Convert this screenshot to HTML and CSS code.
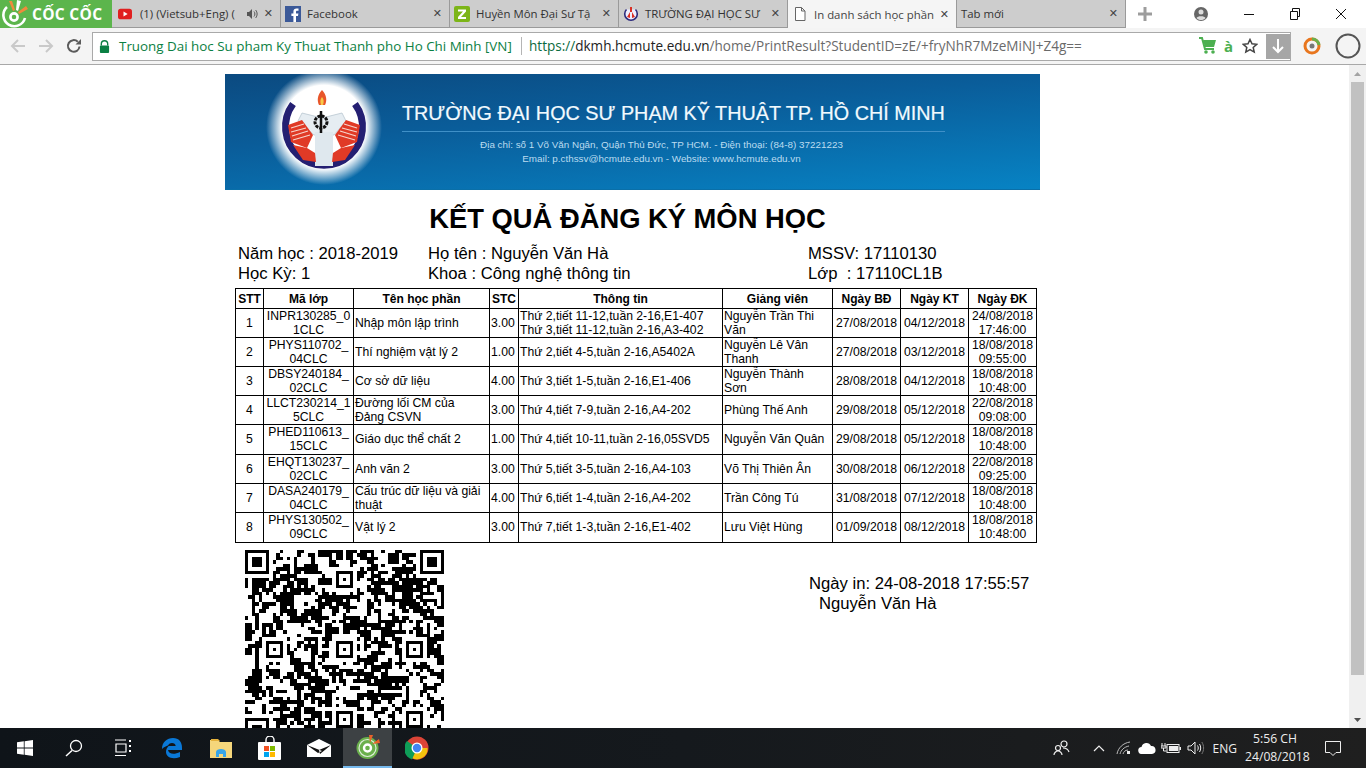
FILE: index.html
```html
<!DOCTYPE html>
<html lang="vi">
<head>
<meta charset="utf-8">
<title>In danh sách học phần</title>
<link rel="stylesheet" href="styles.css">
</head>
<body>
<div class="tabstrip">
  <div class="brand">
    <svg class="brand-logo" viewBox="0 0 28 28" width="28" height="28"><path d="M6 7A11 11 0 1 0 24 18" fill="none" stroke="#fff" stroke-width="2.600"/><circle cx="13" cy="17" r="3.600" fill="none" stroke="#fff" stroke-width="2.600"/><path d="M8 1l4 10 2-1-3-9z" fill="#f08a3c"/><path d="M16 0l-1 10 2 1 3-10z" fill="#fff"/><path d="M25 6l-8 6 1 2 9-5z" fill="#f08a3c"/></svg>
    <span class="brand-name">CỐC CỐC</span>
  </div>
  <div class="tab t1">
    <svg class="fav" viewBox="0 0 16 16" width="14" height="14"><rect y="2" width="16" height="12" rx="3" fill="#e02020"/><path d="M6.300 5.200v5.600L11 8z" fill="#fff"/></svg>
    <span class="tab-title">(1) (Vietsub+Eng) (</span>
    <svg class="speaker" viewBox="0 0 12 12" width="12" height="12"><path d="M1 4h2l3-3v10L3 8H1z" fill="#555"/><path d="M8 3.500c1.200 1.400 1.200 3.600 0 5M9.600 2c2 2.300 2 5.700 0 8" fill="none" stroke="#555"/></svg>
    <span class="close">✕</span>
  </div>
  <div class="tab">
    <svg class="fav" viewBox="0 0 16 16" width="16" height="16"><rect width="16" height="16" fill="#3b5998"/><path d="M11 16V10h2l.4-2.500H11V6c0-.8.3-1.200 1.200-1.200h1.300V2.600C13 2.500 12.400 2.500 11.600 2.500 9.600 2.500 8.400 3.700 8.400 5.700V7.500H6.400V10h2v6z" fill="#fff"/></svg>
    <span class="tab-title">Facebook</span>
    <span class="close">✕</span>
  </div>
  <div class="tab">
    <svg class="fav" viewBox="0 0 16 16" width="16" height="16"><rect width="16" height="16" rx="2" fill="#7cb518"/><path d="M4 3.500h8v2L7 11h5v2H4v-2l5-5.500H4z" fill="#fff"/></svg>
    <span class="tab-title">Huyền Môn Đại Sư Tậ</span>
    <span class="close">✕</span>
  </div>
  <div class="tab">
    <svg class="fav" viewBox="0 0 16 16" width="16" height="16"><path d="M3.500 3.500a6.300 6.300 0 1 0 9 0" fill="#eef" stroke="#2c2a7c" stroke-width="1.600"/><path d="M4 11l3-5v6zM12 11L9 6v6z" fill="#d93025"/><path d="M8 1v5" stroke="#d93025" stroke-width="2"/></svg>
    <span class="tab-title">TRƯỜNG ĐẠI HỌC SƯ</span>
    <span class="close">✕</span>
  </div>
  <div class="tab active">
    <svg class="fav" viewBox="0 0 16 16" width="16" height="16"><path d="M3.500 1.500h6l3.500 3.500v9.500h-9.500zM9.500 1.500V5H13" fill="#fff" stroke="#666"/></svg>
    <span class="tab-title">In danh sách học phần</span>
    <span class="close">✕</span>
  </div>
  <div class="tab last">
    <span class="tab-title">Tab mới</span>
    <span class="close">✕</span>
  </div>
  <svg class="plus" viewBox="0 0 14 14" width="14" height="14"><path d="M5.500 0h3v5.500H14v3H8.500V14h-3V8.500H0v-3h5.500z" fill="#9d9d9d"/></svg>
  <div class="winctl">
    <svg class="profile" viewBox="0 0 16 16" width="16" height="16"><circle cx="8" cy="8" r="7" fill="#666"/><circle cx="8" cy="6" r="2.500" fill="#ddd"/><path d="M3.500 12c1-2.500 8-2.500 9 0-1.200 1.400-2.800 2-4.500 2s-3.300-.6-4.500-2z" fill="#ddd"/></svg>
    <svg class="wbtn" viewBox="0 0 46 20" width="46" height="20"><path d="M18 10.500h10" stroke="#111"/></svg>
    <svg class="wbtn" viewBox="0 0 46 20" width="46" height="20"><path d="M18.500 7.500h7v8h-7zM20.500 7.500v-3h7v8h-2" fill="none" stroke="#111"/></svg>
    <svg class="wbtn" viewBox="0 0 46 20" width="46" height="20"><path d="M18 5l10 10M28 5L18 15" stroke="#111"/></svg>
  </div>
</div>
<div class="toolbar">
  <svg class="nav" viewBox="0 0 16 16" width="16" height="16"><path d="M15 8H2M8 2L2 8l6 6" fill="none" stroke="#c9c9c9" stroke-width="2"/></svg>
  <svg class="nav" viewBox="0 0 16 16" width="16" height="16"><path d="M1 8h13M8 2l6 6-6 6" fill="none" stroke="#c9c9c9" stroke-width="2"/></svg>
  <svg class="nav" viewBox="0 0 16 16" width="16" height="16"><path d="M13.500 8.500A5.800 5.800 0 1 1 11.800 3.800" fill="none" stroke="#5a5a5a" stroke-width="2"/><path d="M9.500 6.500H15V1z" fill="#5a5a5a"/></svg>
  <div class="omnibox">
    <svg class="lock" viewBox="0 0 12 14" width="11" height="13"><path d="M2.500 6V4.200a3.500 3.500 0 0 1 7 0V6" fill="none" stroke="#0b8043" stroke-width="1.500"/><rect x="1" y="6" width="10" height="8" rx="1" fill="#0b8043"/></svg>
    <span class="cert">Truong Dai hoc Su pham Ky Thuat Thanh pho Ho Chi Minh [VN]</span>
    <span class="sep"></span>
    <span class="url"><span class="url-green">https://</span><span class="url-host">dkmh.hcmute.edu.vn</span>/home/PrintResult?StudentID=zE/+fryNhR7MzeMiNJ+Z4g==</span>
    <svg class="cart" viewBox="0 0 20 18" width="20" height="18"><path d="M1 1h3l3 11h9" fill="none" stroke="#4caf50" stroke-width="2"/><path d="M5 3h13l-2 7H7z" fill="#4caf50"/><circle cx="8" cy="15" r="1.800" fill="#4caf50"/><circle cx="15" cy="15" r="1.800" fill="#4caf50"/></svg>
    <span class="a-mark">à</span>
    <svg class="star" viewBox="0 0 16 16" width="16" height="16"><path d="M8 1.500l2 4.300 4.700.5-3.500 3.200 1 4.600L8 11.700l-4.200 2.400 1-4.600-3.500-3.200 4.700-.5z" fill="none" stroke="#444" stroke-width="1.500"/></svg>
    <div class="dl"><svg viewBox="0 0 14 16" width="14" height="16"><path d="M7 1v13M2 9l5 5 5-5" fill="none" stroke="#fff" stroke-width="2"/></svg></div>
  </div>
  <svg class="ext" viewBox="0 0 18 18" width="18" height="18"><circle cx="9" cy="9" r="7" fill="none" stroke="#e8761e" stroke-width="3"/><path d="M9 2a7 7 0 0 1 7 6" fill="none" stroke="#6ab04c" stroke-width="3"/><circle cx="9" cy="9" r="2.500" fill="#777"/></svg>
  <svg class="ring" viewBox="0 0 26 26" width="26" height="26"><circle cx="13" cy="13" r="11.500" fill="none" stroke="#555" stroke-width="2"/></svg>
</div>
<div class="viewport">
  <main class="page">
    <div class="banner">
      <svg class="seal" viewBox="0 0 100 100" width="100" height="100">
        <defs><radialGradient id="glow"><stop offset="72%" stop-color="#fff"/><stop offset="100%" stop-color="#fff" stop-opacity="0"/></radialGradient></defs>
        <circle cx="51" cy="47" r="58" fill="url(#glow)"/>
        <path d="M20 24A38.500 38.500 0 1 0 82 24" fill="none" stroke="#241f72" stroke-width="7"/>
        <path d="M49 10c5 5 5 11 3 15h-6c-2-4-2-10 3-15z" fill="#e8562a"/>
        <path d="M49 17c2 2 2 5 1 8h-2c-1-3-1-6 1-8z" fill="#f7c948"/>
        <path d="M29 33l20 5 20-5 4 8-12 14H41L25 41z" fill="#e6edf2" stroke="#b9c6d0" stroke-width=".8"/>
        <path d="M42 52h18v34H42z" fill="#dfe8ee"/>
        <path d="M15 45l14-5 11 15-6 13-16-6z" fill="#e03a26"/>
        <path d="M87 45l-14-5-11 15 6 13 16-6z" fill="#e03a26"/>
        <path d="M18 48l13-4M18 52l15-4M19 56l16-5M20 60l17-5M84 48l-13-4M84 52l-15-4M83 56l-16-5M82 60l-17-5" stroke="#f6d5cc" stroke-width="1.200"/>
        <path d="M20 65l14 3 8 5 1 9-13-2z" fill="#e03a26"/>
        <path d="M82 65l-14 3-8 5-1 9 13-2z" fill="#e03a26"/>
        <circle cx="48" cy="42" r="6" fill="none" stroke="#111" stroke-width="3" stroke-dasharray="3 1"/>
        <path d="M48 31v22" stroke="#111" stroke-width="2.500"/>
      </svg>
      <div class="banner-text">
        <div class="banner-title">TRƯỜNG ĐẠI HỌC SƯ PHẠM KỸ THUẬT TP. HỒ CHÍ MINH</div>
        <div class="banner-rule"></div>
        <div class="banner-lines">
          <div class="banner-line">Địa chỉ: số 1 Võ Văn Ngân, Quận Thủ Đức, TP HCM. - Điện thoại: (84-8) 37221223</div>
          <div class="banner-line">Email: p.cthssv@hcmute.edu.vn - Website: www.hcmute.edu.vn</div>
        </div>
      </div>
    </div>
    <h1 class="title">KẾT QUẢ ĐĂNG KÝ MÔN HỌC</h1>
    <div class="info">
      <span>Năm học : 2018-2019</span><span>Họ tên : Nguyễn Văn Hà</span><span>MSSV: 17110130</span>
      <span>Học Kỳ: 1</span><span>Khoa : Công nghệ thông tin</span><span>Lớp &nbsp;: 17110CL1B</span>
    </div>
    <table class="grid">
      <colgroup>
        <col class="c1"><col class="c2"><col class="c3"><col class="c4"><col class="c5"><col class="c6"><col class="c7"><col class="c7"><col class="c8">
      </colgroup>
      <thead>
        <tr><th>STT</th><th>Mã lớp</th><th>Tên học phần</th><th>STC</th><th>Thông tin</th><th>Giảng viên</th><th>Ngày BĐ</th><th>Ngày KT</th><th>Ngày ĐK</th></tr>
      </thead>
      <tbody>
        <tr><td class="ctr">1</td><td class="ctr">INPR130285_0<br>1CLC</td><td>Nhập môn lập trình</td><td>3.00</td><td>Thứ 2,tiết 11-12,tuần 2-16,E1-407<br>Thứ 3,tiết 11-12,tuần 2-16,A3-402</td><td>Nguyễn Trần Thi<br>Văn</td><td class="ctr">27/08/2018</td><td class="ctr">04/12/2018</td><td class="ctr">24/08/2018<br>17:46:00</td></tr>
        <tr><td class="ctr">2</td><td class="ctr">PHYS110702_<br>04CLC</td><td>Thí nghiệm vật lý 2</td><td>1.00</td><td>Thứ 2,tiết 4-5,tuần 2-16,A5402A</td><td>Nguyễn Lê Vân<br>Thanh</td><td class="ctr">27/08/2018</td><td class="ctr">03/12/2018</td><td class="ctr">18/08/2018<br>09:55:00</td></tr>
        <tr><td class="ctr">3</td><td class="ctr">DBSY240184_<br>02CLC</td><td>Cơ sở dữ liệu</td><td>4.00</td><td>Thứ 3,tiết 1-5,tuần 2-16,E1-406</td><td>Nguyễn Thành<br>Sơn</td><td class="ctr">28/08/2018</td><td class="ctr">04/12/2018</td><td class="ctr">18/08/2018<br>10:48:00</td></tr>
        <tr><td class="ctr">4</td><td class="ctr">LLCT230214_1<br>5CLC</td><td>Đường lối CM của<br>Đảng CSVN</td><td>3.00</td><td>Thứ 4,tiết 7-9,tuần 2-16,A4-202</td><td>Phùng Thế Anh</td><td class="ctr">29/08/2018</td><td class="ctr">05/12/2018</td><td class="ctr">22/08/2018<br>09:08:00</td></tr>
        <tr class="tall"><td class="ctr">5</td><td class="ctr">PHED110613_<br>15CLC</td><td>Giáo dục thể chất 2</td><td>1.00</td><td>Thứ 4,tiết 10-11,tuần 2-16,05SVD5</td><td>Nguyễn Văn Quân</td><td class="ctr">29/08/2018</td><td class="ctr">05/12/2018</td><td class="ctr">18/08/2018<br>10:48:00</td></tr>
        <tr><td class="ctr">6</td><td class="ctr">EHQT130237_<br>02CLC</td><td>Anh văn 2</td><td>3.00</td><td>Thứ 5,tiết 3-5,tuần 2-16,A4-103</td><td>Võ Thị Thiên Ân</td><td class="ctr">30/08/2018</td><td class="ctr">06/12/2018</td><td class="ctr">22/08/2018<br>09:25:00</td></tr>
        <tr><td class="ctr">7</td><td class="ctr">DASA240179_<br>04CLC</td><td>Cấu trúc dữ liệu và giải<br>thuật</td><td>4.00</td><td>Thứ 6,tiết 1-4,tuần 2-16,A4-202</td><td>Trần Công Tú</td><td class="ctr">31/08/2018</td><td class="ctr">07/12/2018</td><td class="ctr">18/08/2018<br>10:48:00</td></tr>
        <tr class="tall"><td class="ctr">8</td><td class="ctr">PHYS130502_<br>09CLC</td><td>Vật lý 2</td><td>3.00</td><td>Thứ 7,tiết 1-3,tuần 2-16,E1-402</td><td>Lưu Việt Hùng</td><td class="ctr">01/09/2018</td><td class="ctr">08/12/2018</td><td class="ctr">18/08/2018<br>10:48:00</td></tr>
      </tbody>
    </table>
    <div class="foot">
      <svg id="qr" class="qr" viewBox="0 0 57 57" width="199" height="199" shape-rendering="crispEdges"></svg>
      <div class="sign">
        <div>Ngày in: 24-08-2018 17:55:57</div>
        <div class="sign-name">Nguyễn Văn Hà</div>
      </div>
    </div>
  </main>
  <div class="scrollbar">
    <svg class="arrow" viewBox="0 0 17 17" width="17" height="17"><path d="M5 11l3.500-4 3.500 4z" fill="#a3a3a3"/></svg>
    <div class="thumb"></div>
    <svg class="arrow arrow-end" viewBox="0 0 17 17" width="17" height="17"><path d="M5 7l3.500 4 3.500-4z" fill="#505050"/></svg>
  </div>
</div>
<footer class="taskbar">
  <div class="tb-left">
    <span class="tb-btn"><svg viewBox="0 0 16 16" width="16" height="16"><path d="M0 2.300l6.800-1v6.300H0zM7.600 1.200L16 0v7.600H7.600zM0 8.400h6.800v6.300L0 13.700zM7.600 8.400H16V16l-8.400-1.200z" fill="#fff"/></svg></span>
    <span class="tb-btn"><svg viewBox="0 0 18 18" width="18" height="18"><circle cx="11" cy="7" r="5.500" fill="none" stroke="#fff" stroke-width="1.300"/><path d="M7 11.500L1 17" stroke="#fff" stroke-width="1.500"/></svg></span>
    <span class="tb-btn"><svg viewBox="0 0 18 18" width="18" height="18"><path d="M1 1h11M1 16.500h11M2 5h10v8H2z" fill="none" stroke="#fff" stroke-width="1.200"/><path d="M15 1h2v2h-2zM15 6h2v2h-2zM15 11h2v2h-2z" fill="#fff"/></svg></span>
    <span class="tb-btn"><svg viewBox="0 0 22 22" width="22" height="22"><path d="M1 12C1 5 6 1 12 1c6 0 9 4 9 10v2H7c.5 4 6 5 12 2v5c-8 3-14 0-14-5 0-3 1-5 4-7-3 .5-6 2-8 4z" fill="#0a78d7"/><path d="M7 9c.3-2 2-3 4-3s3.500 1 3.700 3z" fill="#13151a"/></svg></span>
    <span class="tb-btn"><svg viewBox="0 0 22 20" width="22" height="20"><path d="M0 2h8l2 2h12v16H0z" fill="#f5d67b"/><path d="M1 1h7l2 2H1z" fill="#e6b23c"/><path d="M6 14c0-4 10-4 10 0v5h-3v-3H9v3H6z" fill="#38a5e8"/></svg></span>
    <span class="tb-btn"><svg viewBox="0 0 24 24" width="24" height="24"><path d="M8 6V4a4 4 0 0 1 8 0v2" fill="none" stroke="#fff" stroke-width="1.400"/><rect y="6" width="23" height="18" rx="1" fill="#fff"/><path d="M6 10h5v5H6z" fill="#f25022"/><path d="M12 10h5v5h-5z" fill="#7fba00"/><path d="M6 16h5v5H6z" fill="#00a4ef"/><path d="M12 16h5v5h-5z" fill="#ffb900"/></svg></span>
    <span class="tb-btn"><svg viewBox="0 0 24 18" width="24" height="18"><path d="M0 6L12 0l12 6v12H0z" fill="#fff"/><path d="M0 6l15 6-4 2zM24 6L12 11l1 4z" fill="#111"/></svg></span>
    <span class="tb-btn tb-active"><svg viewBox="0 0 24 24" width="24" height="24"><circle cx="11.500" cy="13" r="11" fill="#6ab04c"/><circle cx="11.500" cy="13" r="8.500" fill="none" stroke="#dfeed9" stroke-width="1.200"/><circle cx="11.500" cy="13" r="3.500" fill="#6ab04c" stroke="#fff" stroke-width="2.400"/><path d="M13 0l1 8 3-8zM23 4l-7 5 8-1z" fill="#e8622a"/></svg></span>
    <span class="tb-btn"><svg viewBox="0 0 24 24" width="24" height="24"><circle cx="12" cy="12" r="11.500" fill="#db4437"/><path d="M12 12L22.500 12A10.500 10.500 0 0 1 7 22z" fill="#f4c20d"/><path d="M12 12L7 23.500A11.500 11.500 0 0 1 2 5z" fill="#0f9d58"/><circle cx="12" cy="12" r="5.500" fill="#fff"/><circle cx="12" cy="12" r="4.200" fill="#4285f4"/></svg></span>
  </div>
  <div class="tray">
    <svg class="ti-people" viewBox="0 0 18 16" width="18" height="16"><circle cx="11" cy="4" r="3" fill="none" stroke="#eee" stroke-width="1.200"/><circle cx="5" cy="8" r="2.500" fill="none" stroke="#eee" stroke-width="1.200"/><path d="M1 15c0-2 2-4 4-4s4 2 4 4M10 8c3 0 5 1 6 4" fill="none" stroke="#eee" stroke-width="1.200"/></svg>
    <svg class="ti-caret" viewBox="0 0 12 8" width="12" height="8"><path d="M1 7l5-5 5 5" fill="none" stroke="#eee" stroke-width="1.200"/></svg>
    <svg class="ti-wifi" viewBox="0 0 16 14" width="16" height="14"><path d="M1 13C2 7 7 2 14 1M4 13c1-4 4-7 9-8M7 13c.6-2 2-4 5-4" fill="none" stroke="#bbb"/><rect x="11" y="10" width="3" height="3" fill="#eee"/></svg>
    <svg class="ti-cloud" viewBox="0 0 18 12" width="18" height="12"><path d="M4 12a3.500 3.500 0 0 1-.5-7A5 5 0 0 1 13 4a4 4 0 0 1 1 8z" fill="#fff"/></svg>
    <svg class="ti-batt" viewBox="0 0 20 12" width="20" height="12"><path d="M1 1v3M4 1v3M0 4h5v2H0zM2.500 6v3h3" fill="none" stroke="#eee"/><rect x="6" y="2.500" width="12" height="8" fill="none" stroke="#eee"/><rect x="8" y="4" width="9" height="5" fill="#eee"/><rect x="18.500" y="5" width="1.500" height="3" fill="#eee"/></svg>
    <svg class="ti-vol" viewBox="0 0 18 14" width="18" height="14"><path d="M1 5h3l4-4v12L4 9H1z" fill="none" stroke="#eee"/><path d="M10.500 4.500c1 1.500 1 3.500 0 5M12.500 3c1.600 2.300 1.600 5.700 0 8" fill="none" stroke="#eee"/><path d="M14.800 1c2.400 3.600 2.400 8.400 0 12" fill="none" stroke="#777"/></svg>
    <span class="ti-lang">ENG</span>
    <div class="clock"><div>5:56 CH</div><div>24/08/2018</div></div>
    <svg class="ti-note" viewBox="0 0 16 16" width="16" height="16"><path d="M.5 1.500h15v11h-4.500l-3 3-3-3H.5z" fill="none" stroke="#eee"/></svg>
  </div>
</footer>
<script src="qr.js"></script>
</body>
</html>
```

FILE: styles.css
```css
* { box-sizing: border-box; }
html, body { margin: 0; height: 100%; }
body {
  width: 1366px;
  height: 768px;
  overflow: hidden;
  display: flex;
  flex-direction: column;
  background: #fff;
  font-family: "Liberation Sans", Arial, sans-serif;
  color: #000;
}

/* browser chrome */
.tabstrip {
  height: 28px;
  flex: none;
  display: flex;
  align-items: stretch;
  background: #fff;
  font-family: "Open Sans", "Noto Sans", sans-serif;
}
.brand {
  width: 112px;
  background: #5cb54c;
  display: flex;
  align-items: center;
  gap: 3px;
  padding-left: 1px;
  color: #fff;
}
.brand-name { font: 700 15.500px/28px "Open Sans", sans-serif; white-space: nowrap; letter-spacing: .3px; }
.tab {
  width: 169px;
  background: #cdcdcd;
  border-right: 1px solid #9a9a9a;
  border-bottom: 1px solid #9a9a9a;
  display: flex;
  align-items: center;
  gap: 6px;
  padding: 0 7px 0 4px;
  font-size: 11.400px;
  color: #333;
}
.tab.active { background: #f5f5f5; border-bottom: 0; color: #444; }
.tab.last { padding-left: 4px; }
.tab-title { flex: 1; min-width: 0; white-space: nowrap; }
.t1 { padding-left: 6px; }
.t1 .tab-title { margin-left: 2px; }
.close { font-size: 11px; color: #444; line-height: 1; font-family: "DejaVu Sans", sans-serif; }
.speaker { flex: none; }
.fav { flex: none; }
.plus { align-self: center; margin-left: 12px; }
.winctl { margin-left: auto; display: flex; align-items: center; padding-right: 2px; }
.profile { margin-right: 17px; }

.toolbar {
  height: 37px;
  flex: none;
  display: flex;
  align-items: center;
  background: #f4f4f4;
  border-bottom: 1px solid #a8a8a8;
  padding-left: 10px;
  font-family: "Open Sans", "Noto Sans", sans-serif;
}
.nav { margin-right: 12px; }
.nav:nth-child(3) { margin-right: 10px; }
.omnibox {
  width: 1199px;
  height: 29px;
  background: #fff;
  border: 1px solid #a9a9a9;
  display: flex;
  align-items: center;
  padding-left: 6px;
  font-size: 13.550px;
  white-space: nowrap;
  color: #6a6a6a;
}
.lock { margin-right: 9px; flex: none; }
.cert { color: #0b8043; width: 392px; font-size: 13.400px; }
.sep { width: 1px; height: 18px; background: #b5b5b5; margin: 0 7px 0 10px; }
.url { flex: 1; }
.url-green { color: #0b6b40; }
.url-host { color: #222; }
.cart { margin-right: 6px; }
.a-mark { color: #4caf50; font-weight: 700; margin-right: 9px; font-size: 15px; }
.star { margin-right: 8px; }
.dl { width: 24px; height: 25px; background: #a6a6a6; display: flex; align-items: center; justify-content: center; }
.ext { margin-left: 12px; }
.ring { margin-left: 14px; }

/* page */
.viewport {
  height: 663px;
  flex: none;
  display: flex;
  overflow: hidden;
}
.page {
  width: 1349px;
  flex: none;
  padding: 9px 0 0 225px;
  overflow: hidden;
}
.banner {
  width: 815px;
  height: 116px;
  display: flex;
  background: linear-gradient(175deg, #0b4a80 0%, #0a5d9a 40%, #0783c4 100%);
  border-bottom: 1px solid #0a6fa8;
  overflow: hidden;
}
.seal { margin: 6px 0 0 48px; flex: none; overflow: visible; }
.banner-text { margin: 26px 0 0 29px; color: #fff; width: 543px; flex: none; }
.banner-title { font-size: 19.800px; line-height: 26px; white-space: nowrap; color: #f2fafe; -webkit-text-stroke: .2px #f2fafe; }
.banner-rule { height: 1px; background: #3f90c8; margin: 5px 0 6px; }
.banner-lines { padding-right: 24px; }
.banner-line { font-size: 9.850px; line-height: 14px; text-align: center; color: #bcdcf0; white-space: nowrap; }

.title {
  width: 805px;
  margin: 13px 0 0;
  font-size: 27.350px;
  line-height: 31px;
  text-align: center;
  font-weight: 700;
}
.info {
  display: grid;
  grid-template-columns: 190px 380px 1fr;
  width: 800px;
  margin: 10px 0 0 13px;
  font-size: 16.650px;
  line-height: 20px;
  white-space: nowrap;
}
.grid {
  margin: 4px 0 0 10px;
  width: 801px;
  table-layout: fixed;
  border-collapse: collapse;
  font-size: 12.200px;
  line-height: 14px;
}
.c1 { width: 28px; } .c2 { width: 90px; } .c3 { width: 136px; } .c4 { width: 29px; }
.c5 { width: 204px; } .c6 { width: 110px; } .c7 { width: 68px; } .c8 { width: 68px; }
.grid th, .grid td { border: 1px solid #000; padding: 0 1px; white-space: nowrap; overflow: hidden; }
.grid th { height: 20px; font-weight: 700; font-size: 12px; }
.grid td { height: 29px; }
.grid .tall td { height: 30px; padding-bottom: 1px; }
.ctr { text-align: center; }

.foot { display: flex; margin: 7px 0 0 20px; }
.qr { flex: none; display: block; }
.sign { margin: 24px 0 0 365px; font-size: 16.650px; line-height: 20px; white-space: nowrap; }
.sign-name { padding-left: 10px; }

.scrollbar {
  width: 17px;
  flex: none;
  background: #f0f0f0;
  display: flex;
  flex-direction: column;
}
.arrow { flex: none; }
.arrow-end { margin-top: auto; }
.thumb { height: 593px; flex: none; background: #c1c1c1; margin: 0 2px; }

/* taskbar */
.taskbar {
  height: 40px;
  flex: none;
  display: flex;
  justify-content: space-between;
  background: linear-gradient(90deg, #0f1419 0%, #15191d 50%, #1f1f1f 100%);
  color: #eee;
  font-family: "Open Sans", "Noto Sans", sans-serif;
}
.tb-left { display: flex; }
.tb-btn { width: 49px; height: 40px; display: flex; align-items: center; justify-content: center; }
.tb-active { background: #3d4144; border-bottom: 2px solid #76b9ed; }
.tray { display: flex; align-items: center; }
.tray > * { flex: none; }
.ti-caret { margin-left: 22px; }
.ti-wifi { margin-left: 11px; }
.ti-cloud { margin-left: 6px; }
.ti-batt { margin-left: 5px; }
.ti-vol { margin-left: 6px; }
.ti-lang { margin-left: 8px; font-size: 12px; }
.clock { margin-left: 8px; width: 60px; text-align: center; font-size: 12.200px; line-height: 18px; }
.ti-note { margin: 0 25px 0 20px; }
```

FILE: qr.js
```js
// Draws the printed QR code as one SVG path from a fixed module pattern.
(function () {
  var N = 57, m = [], r, c, s = 48271;
  function next() { s = (s * 16807) % 2147483647; return s / 2147483647; }
  for (r = 0; r < N; r++) {
    m[r] = [];
    for (c = 0; c < N; c++) {
      var up = r > 0 && m[r - 1][c], left = c > 0 && m[r][c - 1];
      var both = up && left;
      m[r][c] = next() < (both ? 0.68 : up || left ? 0.55 : 0.3);
    }
  }
  function set(a, b, v) { if (a >= 0 && b >= 0 && a < N && b < N) m[a][b] = v; }
  function ring(x, y, size, inner) {
    var a, b;
    for (a = -1; a <= size; a++) for (b = -1; b <= size; b++) set(y + a, x + b, false);
    for (a = 0; a < size; a++) for (b = 0; b < size; b++) {
      var edge = a === 0 || b === 0 || a === size - 1 || b === size - 1;
      var lo = (size - inner) / 2, hi = (size + inner) / 2;
      if (edge || (a >= lo && a < hi && b >= lo && b < hi)) set(y + a, x + b, true);
    }
  }
  ring(0, 0, 7, 3); ring(50, 0, 7, 3); ring(0, 48, 7, 3);
  [[6, 26], [26, 26], [46, 26], [26, 46], [46, 46], [26, 6]].forEach(function (p) { ring(p[0], p[1], 5, 1); });
  var d = "";
  for (r = 0; r < N; r++) for (c = 0; c < N; c++) if (m[r][c]) d += "M" + c + " " + r + "h1v1h-1z";
  var p = document.createElementNS("http://www.w3.org/2000/svg", "path");
  p.setAttribute("d", d);
  document.getElementById("qr").appendChild(p);
})();
```
